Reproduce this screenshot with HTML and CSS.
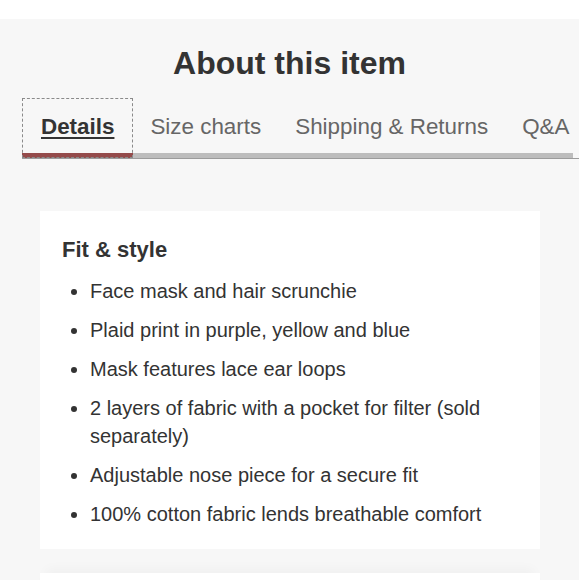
FILE: index.html
```html
<!DOCTYPE html>
<html lang="en">
<head>
<meta charset="utf-8">
<title>About this item</title>
<link rel="stylesheet" href="styles.css">
</head>
<body>
<div class="topstrip"></div>
<main class="about">
  <h2 class="about-title">About this item</h2>
  <div class="tabbar">
    <div class="tabs" role="tablist">
      <button class="tab tab-active" role="tab">Details</button>
      <button class="tab" role="tab">Size charts</button>
      <button class="tab" role="tab">Shipping &amp; Returns</button>
      <button class="tab" role="tab">Q&amp;A</button>
    </div>
  </div>
  <section class="card">
    <h3 class="card-title">Fit &amp; style</h3>
    <ul class="bullets">
      <li>Face mask and hair scrunchie</li>
      <li>Plaid print in purple, yellow and blue</li>
      <li>Mask features lace ear loops</li>
      <li>2 layers of fabric with a pocket for filter (sold separately)</li>
      <li>Adjustable nose piece for a secure fit</li>
      <li>100% cotton fabric lends breathable comfort</li>
    </ul>
  </section>
  <section class="card card-next"></section>
</main>
</body>
</html>
```
FILE: styles.css
```css
html, body {
  margin: 0;
  padding: 0;
  background: #f7f7f7;
  font-family: "Liberation Sans", Arial, Helvetica, sans-serif;
  color: #333;
  overflow: hidden;
}

.topstrip {
  height: 19px;
  background: #ffffff;
}

.about {
  padding-top: 24px;
}

.about-title {
  margin: 0;
  text-align: center;
  font-size: 32px;
  line-height: 40px;
  font-weight: bold;
  color: #333;
}

.tabbar {
  margin-top: 15px;
  margin-left: 22px;
  border-bottom: 1px solid #9c9c9c;
  overflow: hidden;
}

.tabs {
  display: flex;
  margin-right: 6px;
  border-bottom: 5px solid #bdbdbd;
}

.tab {
  flex: none;
  background: none;
  border: none;
  border-bottom: 5px solid transparent;
  margin-bottom: -5px;
  padding: 16px 17px 13px;
  font-family: "Liberation Sans", Arial, Helvetica, sans-serif;
  font-size: 22.4px;
  line-height: 26px;
  color: #666;
  cursor: pointer;
}

.tab-active {
  padding-left: 19px;
  padding-right: 19px;
  font-weight: bold;
  color: #333;
  text-decoration: underline;
  text-underline-offset: 3px;
  text-decoration-thickness: 2px;
  border-bottom-color: #944b4b;
  outline: 1px dashed #8a8a8a;
  outline-offset: -1px;
}

.card {
  margin: 52px 39px 0 40px;
  background: #ffffff;
  padding: 24px 22px 21px;
}

.card-title {
  margin: 0;
  font-size: 22px;
  line-height: 30px;
  font-weight: bold;
  color: #333;
}

.bullets {
  margin: 12px 0 0;
  padding-left: 28px;
  list-style: disc;
}

.bullets li {
  font-size: 20px;
  line-height: 28px;
  color: #333;
  margin-bottom: 11px;
}

.bullets li:last-child {
  margin-bottom: 0;
}

.card-next {
  margin-top: 24px;
  height: 40px;
  padding: 0;
  box-shadow: 0 -10px 12px -6px rgba(0, 0, 0, 0.03);
}
```
